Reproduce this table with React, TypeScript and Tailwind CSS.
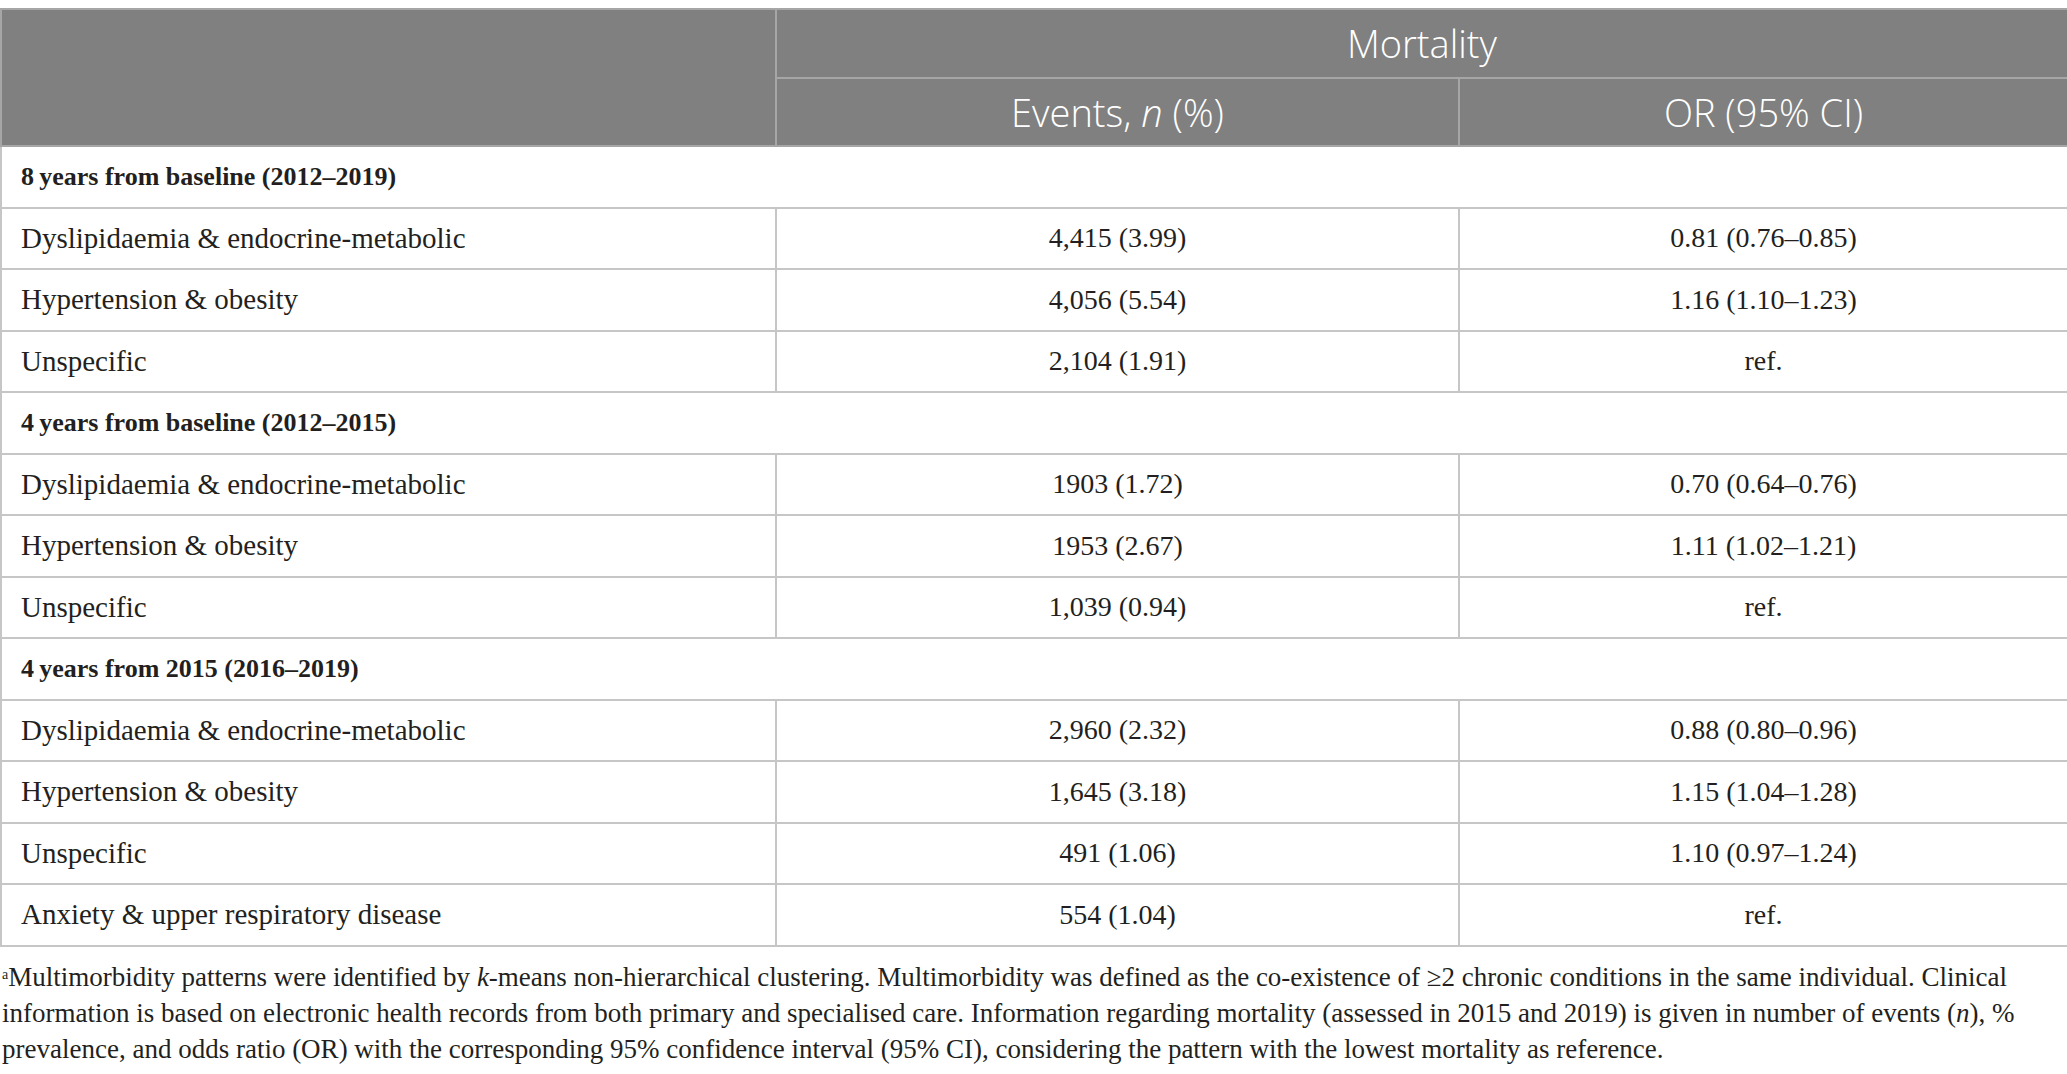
import React from "react";

type Row = { label: string; events: string; or: string };
type Section = { title: string; rows: Row[] };

const sections: Section[] = [
  {
    title: "8\u2009years from baseline (2012–2019)",
    rows: [
      { label: "Dyslipidaemia & endocrine-metabolic", events: "4,415 (3.99)", or: "0.81 (0.76–0.85)" },
      { label: "Hypertension & obesity", events: "4,056 (5.54)", or: "1.16 (1.10–1.23)" },
      { label: "Unspecific", events: "2,104 (1.91)", or: "ref." },
    ],
  },
  {
    title: "4\u2009years from baseline (2012–2015)",
    rows: [
      { label: "Dyslipidaemia & endocrine-metabolic", events: "1903 (1.72)", or: "0.70 (0.64–0.76)" },
      { label: "Hypertension & obesity", events: "1953 (2.67)", or: "1.11 (1.02–1.21)" },
      { label: "Unspecific", events: "1,039 (0.94)", or: "ref." },
    ],
  },
  {
    title: "4\u2009years from 2015 (2016–2019)",
    rows: [
      { label: "Dyslipidaemia & endocrine-metabolic", events: "2,960 (2.32)", or: "0.88 (0.80–0.96)" },
      { label: "Hypertension & obesity", events: "1,645 (3.18)", or: "1.15 (1.04–1.28)" },
      { label: "Unspecific", events: "491 (1.06)", or: "1.10 (0.97–1.24)" },
      { label: "Anxiety & upper respiratory disease", events: "554 (1.04)", or: "ref." },
    ],
  },
];

const serif = "font-['Liberation_Serif',serif]";
const sans = "font-['Open_Sans',sans-serif]";
const td = "border-2 border-[#c6c6c6] h-[61.5px] align-middle leading-none";
const th = "border-2 border-[#a6a6a6] bg-[#7f807f] text-[38px] font-light text-white";

export default function App() {
  return (
    <div className="w-[2067px] bg-white pt-[8px] text-[#231f20]">
      <table className="w-full table-fixed border-collapse">
        <colgroup>
          <col className="w-[775px]" />
          <col className="w-[683px]" />
          <col className="w-[609px]" />
        </colgroup>
        <thead className={sans}>
          <tr className="h-[69px]">
            <th rowSpan={2} className={th} />
            <th colSpan={2} className={th}>
              Mortality
            </th>
          </tr>
          <tr className="h-[68px]">
            <th className={th}>
              Events, <i>n</i> (%)
            </th>
            <th className={th}>OR (95% CI)</th>
          </tr>
        </thead>
        <tbody className={serif}>
          {sections.map((s) => (
            <React.Fragment key={s.title}>
              <tr>
                <td colSpan={3} className={`${td} px-[19px] text-[26px] font-bold`}>
                  {s.title}
                </td>
              </tr>
              {s.rows.map((r) => (
                <tr key={s.title + r.label}>
                  <td className={`${td} px-[19px] text-[29px]`}>{r.label}</td>
                  <td className={`${td} text-center text-[28px]`}>{r.events}</td>
                  <td className={`${td} text-center text-[28px]`}>{r.or}</td>
                </tr>
              ))}
            </React.Fragment>
          ))}
        </tbody>
      </table>

      {/* 脚注 */}
      <p className={`${serif} mt-[12px] pl-[2px] text-[27px] leading-[36px]`}>
        <sup className="text-[14px]">a</sup>Multimorbidity patterns were identified by <i>k</i>-means non-hierarchical
        clustering. Multimorbidity was defined as the co-existence of ≥2 chronic conditions in the same individual.
        Clinical
        <br />
        information is based on electronic health records from both primary and specialised care. Information
        regarding mortality (assessed in 2015 and 2019) is given in number of events (<i>n</i>), %
        <br />
        prevalence, and odds ratio (OR) with the corresponding 95% confidence interval (95% CI), considering the
        pattern with the lowest mortality as reference.
      </p>
    </div>
  );
}
